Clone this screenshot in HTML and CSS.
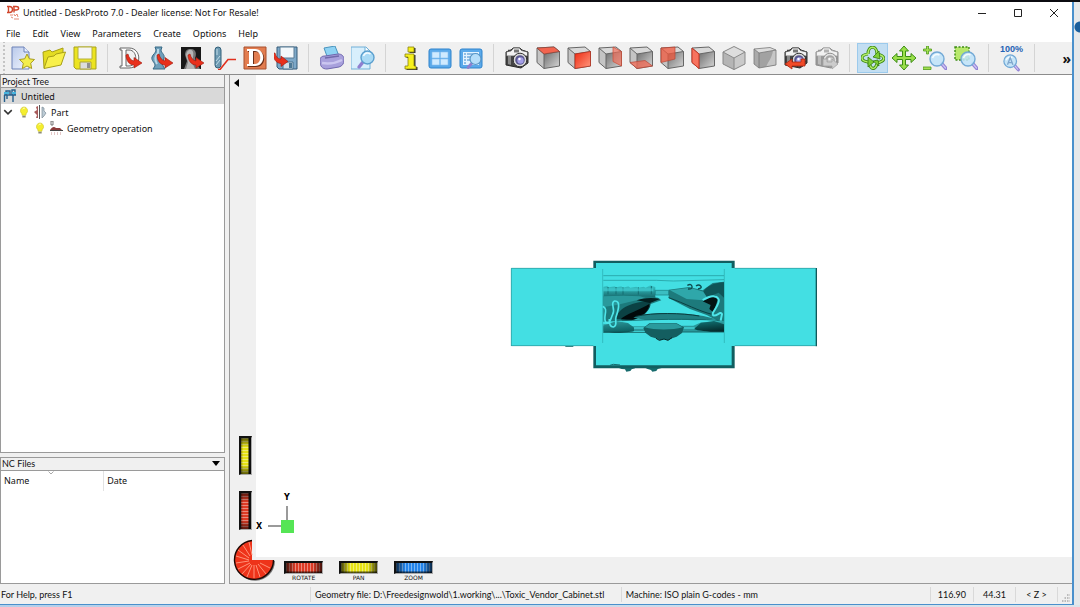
FILE: index.html
```html
<!DOCTYPE html>
<html lang="en">
<head>
  <meta charset="UTF-8">
  <meta name="viewport" content="width=device-width, initial-scale=1.0">
  <title>Untitled - DeskProto 7.0</title>
  <link rel="stylesheet" href="styles.css">
</head>
<body>
  <!-- Shared icon parts -->
  <svg class="defs" aria-hidden="true">
    <defs>
      <linearGradient id="gray" x1="0" y1="0" x2="1" y2="1">
        <stop offset="0" stop-color="#6e6e6e"/><stop offset="1" stop-color="#d8d8d8"/>
      </linearGradient>
      <linearGradient id="red" x1="0" y1="0" x2="1" y2="1">
        <stop offset="0" stop-color="#ee2a12"/><stop offset="1" stop-color="#ff9a80"/>
      </linearGradient>
      <linearGradient id="page" x1="0" y1="0" x2="1" y2="1">
        <stop offset="0" stop-color="#b9c9ea"/><stop offset="1" stop-color="#f2f6ff"/>
      </linearGradient>
      <linearGradient id="shade" x1="0" y1="0" x2="1" y2="1">
        <stop offset="0" stop-color="#2f9c9f"/><stop offset="0.5" stop-color="#0f6466"/><stop offset="1" stop-color="#021c1d"/>
      </linearGradient>
      <linearGradient id="shade2" x1="0" y1="0" x2="0" y2="1">
        <stop offset="0" stop-color="#38c9cd"/><stop offset="1" stop-color="#0d4f51"/>
      </linearGradient>
      <symbol id="arrow" viewBox="0 0 24 24">
        <path d="M9 8c1 4 3 6.500 6 7v-3.500l8 5.500-8 5v-3c-5 0-8-5-8-10z" fill="#e8301c" stroke="#9c1a0e" stroke-width=".6"/>
      </symbol>
      <symbol id="lens" viewBox="0 0 24 24">
        <path d="M18 17l4 4.500" stroke="#9484d6" stroke-width="3.600" stroke-linecap="round"/>
        <path d="M18.500 17.500l3 3.500" stroke="#cfc6f5" stroke-width="1.200" stroke-linecap="round"/>
        <circle cx="13" cy="12" r="7" fill="#bfe2f8" fill-opacity=".88" stroke="#72a9d6" stroke-width="1.400"/>
        <path d="M8.500 11c1-3 4-4.500 7-3" fill="none" stroke="#f4fbff" stroke-width="1.600"/>
      </symbol>
      <symbol id="cube" viewBox="0 0 24 24">
        <path d="M1 2l17-1 5.500 4.500L8 8z" fill="#d9d9d9"/>
        <path d="M1 2l7 6v14.500L1 16.500z" fill="#c4c4c4"/>
        <path d="M8 8l15.500-2.500V20L8 22.500z" fill="url(#gray)"/>
        <path d="M1 2l17-1 5.500 4.500V20L8 22.500 1 16.500zM1 2l7 6 15.500-2.500M8 8v14.500" fill="none" stroke="#666" stroke-width="1"/>
      </symbol>
      <symbol id="camera" viewBox="0 0 24 24">
        <path d="M1 6l5-2 2-2 7 0 2 2 6 2v11l-7 5-15-3z" fill="#444" stroke="#2c2c2c"/>
        <path d="M1.500 6l5-1.500 2-2.500h6l2 2.500 6 1.500v4H1.500z" fill="#f2f2f2" stroke="#555" stroke-width=".8"/>
        <path d="M9 3.500h5v3H9z" fill="#777"/>
        <path d="M3 4.500h3" stroke="#444" stroke-width="1.500"/>
        <path d="M3 10v8l3 1v-9z" fill="#888"/>
        <circle cx="15" cy="14" r="6.800" fill="#d8d8d8" stroke="#333"/>
        <circle cx="15" cy="14" r="4.800" fill="#5a5890"/>
        <circle cx="15.500" cy="14.500" r="3.200" fill="#a59fe8"/>
        <circle cx="14.500" cy="13" r="1.200" fill="#fff"/>
      </symbol>
      <symbol id="bulb" viewBox="0 0 10 14">
        <path d="M5 1a4 4 0 0 1 2.500 7L7 10H3l-.5-2A4 4 0 0 1 5 1z" fill="#f4ee2e" stroke="#c9bf20" stroke-width=".6"/>
        <path d="M3.500 3.500C4 2.500 5 2 6 2.500" stroke="#fffde0" fill="none"/>
        <path d="M3.200 10.500h3.600v2H3.200z" fill="#8b8b76"/>
      </symbol>
    </defs>
  </svg>

  <div class="desktop">
    <div class="window">
      <header class="titlebar">
        <svg class="logo" viewBox="0 0 14 16" aria-hidden="true">
          <path d="M1 1.500h2.500c4 0 4 6 0 6H1M2.500 1.500v6M8 1.500v6M7 1.500h3c3.500 0 3.500 3.500 0 3.500H8" fill="none" stroke="#d0452b" stroke-width="1.400"/>
          <path d="M4 10h3M8 9l1 2 2-2 1 3M5 12l2 1M8 14h5" fill="none" stroke="#e58a74"/>
        </svg>
        <h1 class="title">Untitled - DeskProto 7.0 - Dealer license: Not For Resale!</h1>
        <div class="window-buttons">
          <button type="button" aria-label="Minimize"><svg viewBox="0 0 10 10"><path d="M1 5.500h8"/></svg></button>
          <button type="button" aria-label="Maximize"><svg viewBox="0 0 10 10"><path d="M1.500 1.500h7v7h-7z"/></svg></button>
          <button type="button" aria-label="Close"><svg viewBox="0 0 10 10"><path d="M1 1l8 8M9 1l-8 8"/></svg></button>
        </div>
      </header>

      <nav class="menubar" aria-label="Main menu">
        <button type="button">File</button>
        <button type="button">Edit</button>
        <button type="button">View</button>
        <button type="button">Parameters</button>
        <button type="button">Create</button>
        <button type="button">Options</button>
        <button type="button">Help</button>
      </nav>

      <div class="toolbar" role="toolbar" aria-label="Tools">
        <div class="group">
          <button type="button" aria-label="New project">
            <svg viewBox="0 0 24 24"><path d="M1 1h12l5 5v17H1z" fill="url(#page)" stroke="#6c82b8"/><path d="M13 1v5h5" fill="#e7eeff" stroke="#6c82b8"/><path d="M16 8l2.300 4.800 5.200.7-3.800 3.700 1 5.300-4.700-2.500-4.700 2.500 1-5.300-3.800-3.700 5.200-.7z" fill="#f3ee4c" stroke="#a89c22"/></svg>
          </button>
          <button type="button" aria-label="Open project">
            <svg viewBox="0 0 24 24"><path d="M2 22L1 6l7-2 2 2 11-4v6" fill="#e4dc22" stroke="#a8a018"/><path d="M2 22.500L6 11l6-1 2-2 9.500-2L19 19z" fill="#f8f04a" stroke="#a8a018"/></svg>
          </button>
          <button type="button" aria-label="Save project">
            <svg viewBox="0 0 24 24"><path d="M1 1h22v22H3l-2-2z" fill="#ece420" stroke="#a8a21c"/><path d="M5 1h14v12H5z" fill="#f5f5f5" stroke="#b5b03a"/><path d="M7 16h11v7H7z" fill="#ddd" stroke="#aaa43a"/><path d="M14 17h3v5h-3z" fill="#8f8f8f"/></svg>
          </button>
        </div>
        <div class="group">
          <button type="button" aria-label="Load vector file">
            <svg viewBox="0 0 24 24"><path d="M1 2h9c13 0 13 20 0 20H1v-2h2V4H1zM7 4v16h3c9 0 9-16 0-16z" fill="#fff" stroke="#555" stroke-width=".9"/><use href="#arrow"/></svg>
          </button>
          <button type="button" aria-label="Load geometry file">
            <svg viewBox="0 0 24 24"><path d="M5 1h7l-1 3c0 3 4 4 3 8-1 4-2 5-1 8l2 3H3l2-3c0-4-4-5-3-9 1-3 4-4 4-7z" fill="#6f9fba" stroke="#386a86"/><path d="M8 3v4c-3 3-4 6-1 11" fill="none" stroke="#b9d9e8" stroke-width="2"/><use href="#arrow"/></svg>
          </button>
          <button type="button" aria-label="Load bitmap file">
            <svg viewBox="0 0 24 24"><path d="M0 1h20v22H0z" fill="#181818"/><path d="M9 3c6-1 7 5 5 9l1 4 4 7H3l3-8-2-6c0-4 2-6 5-6z" fill="#777"/><path d="M8 4c4-1 5 3 4 7l-1 5 3 7H5l2-7-2-6c0-3 1-5 3-6z" fill="#b5b5b5"/><use href="#arrow"/></svg>
          </button>
          <button type="button" aria-label="Toolpath">
            <svg viewBox="0 0 24 24"><rect x="3" y="1" width="6" height="21" rx="3" fill="#6e9bb3" stroke="#33617b"/><path d="M4 15l4-5M4 19l4-5M5 3v6" stroke="#c1dce8"/><path d="M6 23.500h2l8-10h8" fill="none" stroke="#e0301e" stroke-width="1.600"/></svg>
          </button>
          <button type="button" aria-label="DeskProto wizard">
            <svg viewBox="0 0 24 24"><path d="M1 1h22v22H1z" fill="#e27d50" stroke="#a8502e"/><path d="M4 3h8c11 0 11 17 0 17H4v-2h2V5H4zM10 5v13h2c7 0 7-13 0-13z" fill="#6b2e17" transform="translate(1 1)"/><path d="M4 3h8c11 0 11 17 0 17H4v-2h2V5H4zM10 5v13h2c7 0 7-13 0-13z" fill="#fff"/></svg>
          </button>
          <button type="button" aria-label="Write NC program">
            <svg viewBox="0 0 24 24"><path d="M3 1h20v22H5l-2-2z" fill="#7da8c8" stroke="#345a78"/><path d="M6 1h14v11H6z" fill="#f3f8fb" stroke="#5a7d96"/><path d="M9 16h10v7H9z" fill="#cfdfe9" stroke="#49708d"/><path d="M15 17h3v5h-3z" fill="#4c7895"/><path d="M1 7c1 4 3 6 6 6v-3l7 5.500-7 5v-3c-5 0-8-5-8-10.500z" fill="#e8301c" stroke="#9c1a0e" stroke-width=".6"/></svg>
          </button>
        </div>
        <div class="group">
          <button type="button" aria-label="Print">
            <svg viewBox="0 0 24 24"><path d="M4 2l11-2 4 10-11 3z" fill="#8fd3f4" stroke="#4a94bd"/><path d="M0 15c0-4 2-5 5-5l13-2c4 0 6 2 6 6s-2 6-5 7L7 23c-5 0-7-3-7-8z" fill="#a8a0dc" stroke="#6f67ae"/><path d="M5 12l14-2" stroke="#7069ab" stroke-width="1.500"/><path d="M2 17c6 1 14 0 20-3" fill="none" stroke="#cbc6f0" stroke-width="2.500"/></svg>
          </button>
          <button type="button" aria-label="Print preview">
            <svg viewBox="0 0 24 24"><path d="M0 1h15l4 4v18H0z" fill="#d8effc" stroke="#71b0d8"/><path d="M14 1v5h5" fill="#fff" stroke="#71b0d8"/><path d="M12 16l-4 5" stroke="#8f7fd0" stroke-width="3.400" stroke-linecap="round"/><circle cx="16.500" cy="11.500" r="6.500" fill="#a9daf5" stroke="#5b9fce" stroke-width="1.400"/><path d="M12.500 10c1-3 4-4 7-2" stroke="#f4fbff" stroke-width="1.600" fill="none"/></svg>
          </button>
        </div>
        <div class="group">
          <button type="button" aria-label="Information">
            <svg viewBox="0 0 24 24"><path d="M11 1h6v5h-6zM8 8h9v12h2v3H8v-3h3v-9H8z" fill="#333" transform="translate(1.500 1)"/><path d="M11 1h6v5h-6zM8 8h9v12h2v3H8v-3h3v-9H8z" fill="#f6f01c" stroke="#8a8410" stroke-width=".8"/></svg>
          </button>
          <button type="button" aria-label="Four views">
            <svg viewBox="0 0 24 24"><rect x="1" y="3" width="22" height="19" rx="2" fill="#5aa9ea" stroke="#2f83cc"/><path d="M4 6h7.500v6H4zM12.500 6H20v6h-7.500zM4 13h7.500v6H4zM12.500 13H20v6h-7.500z" fill="#cfeaff" stroke="#86c1f0" stroke-width=".6"/></svg>
          </button>
          <button type="button" aria-label="Single view">
            <svg viewBox="0 0 24 24"><rect x="1" y="3" width="22" height="19" rx="2" fill="#5aa9ea" stroke="#2f83cc"/><path d="M4 6h16v13H4z" fill="#e3f3ff"/><path d="M5 8h2M5 11h2M5 14h2M5 17h2M8 8h11M8 11h4M8 14h4" stroke="#3c88cc"/><path d="M13 17l-4 4.500" stroke="#8f7fd0" stroke-width="2.800" stroke-linecap="round"/><circle cx="16.500" cy="13" r="5.500" fill="#b5defa" stroke="#5795c6" stroke-width="1.200"/></svg>
          </button>
        </div>
        <div class="group">
          <button type="button" aria-label="Camera"><svg viewBox="0 0 24 24"><use href="#camera"/></svg></button>
          <button type="button" aria-label="Top view"><svg viewBox="0 0 24 24"><use href="#cube"/><path d="M1 2l17-1 5.500 4.500L8 8z" fill="#f2644f" stroke="#8c4035" stroke-width=".7"/></svg></button>
          <button type="button" aria-label="Front view"><svg viewBox="0 0 24 24"><use href="#cube"/><path d="M8 8l15.500-2.500V20L8 22.500z" fill="url(#red)" stroke="#b52a18" stroke-width=".7"/></svg></button>
          <button type="button" aria-label="Right view"><svg viewBox="0 0 24 24"><use href="#cube"/><path d="M15 1l8.500 4.500V20L15 15.500z" fill="#f36a54" fill-opacity=".65" stroke="#cf4d38" stroke-width=".7"/></svg></button>
          <button type="button" aria-label="Bottom view"><svg viewBox="0 0 24 24"><use href="#cube"/><path d="M1 16.500l15-2 7.500 5.500L8 22.500z" fill="#f36a54" fill-opacity=".75" stroke="#b94838" stroke-width=".7"/></svg></button>
          <button type="button" aria-label="Back view"><svg viewBox="0 0 24 24"><use href="#cube"/><path d="M1 2l14-1v12L1 16.500z" fill="#f0583e" fill-opacity=".75" stroke="#b94838" stroke-width=".7"/></svg></button>
          <button type="button" aria-label="Left view"><svg viewBox="0 0 24 24"><use href="#cube"/><path d="M1 2l7 6v14.500L1 16.500z" fill="#f7735f" stroke="#c93522"/></svg></button>
          <button type="button" aria-label="Isometric view"><svg viewBox="0 0 24 24"><path d="M12 0l11 6-11 6L1 6z" fill="#ddd"/><path d="M1 6l11 6v12L1 18z" fill="#b5b5b5"/><path d="M23 6l-11 6v12l11-6z" fill="#c9c9c9"/><path d="M12 .5L23 6v12l-11 5.500L1 18V6zM1 6l11 6 11-6M12 12v11.500" fill="none" stroke="#888"/></svg></button>
          <button type="button" aria-label="Perspective view"><svg viewBox="0 0 24 24"><path d="M1 3l16-1.500L23 4 6 7z" fill="#ddd"/><path d="M1 3l5 4v15l-5-4z" fill="#aaa"/><path d="M6 7l17-3v15L6 22z" fill="#a2a2a2"/><path d="M23 4v15l-10 2C15 16 19 12 20 4.500z" fill="#c6c6c6"/><path d="M1 3l16-1.500L23 4v15L6 22l-5-4zM1 3l5 4 17-3M6 7v15" fill="none" stroke="#777" stroke-width=".8"/></svg></button>
          <button type="button" aria-label="Restore view"><svg viewBox="0 0 24 24"><use href="#camera"/><path d="M1 18l7-5v3h9v-3h4v7H8v3z" fill="#f04a28" stroke="#a82712" stroke-width=".8"/></svg></button>
          <button type="button" aria-label="Store view" disabled><svg viewBox="0 0 24 24"><use href="#camera"/><path d="M23 18l-6-5v3h-5v-3H8v7h9v3z" fill="#aaa" stroke="#555" stroke-width=".8"/></svg></button>
        </div>
        <div class="group">
          <button type="button" class="checked" aria-pressed="true" aria-label="Rotate">
            <svg viewBox="0 0 24 24"><path d="M7 8c0-9 9-9 9 0M7 8c-8 1-8 7 0 8M16 8c9 2 9 7 0 9M8 17c2 7 6 7 8 1" fill="none" stroke="#3d8c14" stroke-width="3.200"/><path d="M7 8c0-9 9-9 9 0M7 8c-8 1-8 7 0 8M16 8c9 2 9 7 0 9M8 17c2 7 6 7 8 1" fill="none" stroke="#b4ec6a" stroke-width="1.400"/><path d="M7 11l6 5-6 5zM18 5l-6 6 7 2zM12 15l5-1 1 6z" fill="#7ccf34" stroke="#33780f" stroke-width=".8"/></svg>
          </button>
          <button type="button" aria-label="Pan">
            <svg viewBox="0 0 24 24"><path d="M12 0l4.500 5h-3v5.500H19v-3l5 4.500-5 4.500v-3h-5.500V19h3L12 24l-4.500-5h3v-5.500H5v3L0 12l5-4.500v3h5.500V5h-3z" fill="#9be04a" stroke="#3d8c14"/></svg>
          </button>
          <button type="button" aria-label="Zoom">
            <svg viewBox="0 0 24 24"><path d="M3.500 0h2v3h3v2h-3v3h-2V5h-3V3h3zM0 21h8v2.500H0z" fill="#a5e052" stroke="#4f9a1c" stroke-width=".8"/><use href="#lens" x="1" y="1"/></svg>
          </button>
          <button type="button" aria-label="Zoom to rectangle">
            <svg viewBox="0 0 24 24"><path d="M1 1h14v13H1z" fill="#b8e86c" stroke="#3d8c14" stroke-width="1.400" stroke-dasharray="2 1.500"/><use href="#lens" x="1" y="1"/></svg>
          </button>
        </div>
        <div class="group">
          <button type="button" class="fit" aria-label="Zoom to 100%">
            <span>100%</span>
            <svg viewBox="5 4 20 20"><use href="#lens" width="24" height="24"/><path d="M10 16l3-8 3 8M11 13.500h4" fill="none" stroke="#7fa6cc" stroke-width="1.500"/></svg>
          </button>
        </div>
        <button type="button" class="more" aria-label="More tools">»</button>
      </div>

      <main class="workspace">
        <aside class="sidebar">
          <section class="panel tree-panel">
            <h2 class="panel-title">Project Tree</h2>
            <ul class="tree">
              <li class="row selected">
                <svg class="wide" viewBox="0 0 14 14"><path d="M1 6h12M3 6V2h4v4M9 6V1h3v5M1.500 6v7M10 6v7M4 6v4" fill="none" stroke="#255f8c" stroke-width="1.400"/><path d="M1 4h5M9 4h4" stroke="#47b5df" stroke-width="2"/></svg>
                <span>Untitled</span>
              </li>
              <li class="row">
                <button type="button" class="expander" aria-label="Collapse Part"><svg viewBox="0 0 8 8"><path d="M1 2.500l3 3 3-3" fill="none" stroke="#333" stroke-width="1.200"/></svg></button>
                <svg class="bulb" viewBox="0 0 10 14"><use href="#bulb"/></svg>
                <svg class="wide" viewBox="0 0 14 14"><path d="M5 1v12H3l1-3-3-3 3-2-1-3z" fill="#a85a5a"/><path d="M6.500 0v14" stroke="#555"/><path d="M9 2l2 1v3l2 2-2 3-2 2z" fill="#bccbd5" stroke="#7b8b96" stroke-width=".7"/></svg>
                <span>Part</span>
              </li>
              <li class="row operation">
                <svg class="bulb" viewBox="0 0 10 14"><use href="#bulb"/></svg>
                <svg class="wide" viewBox="0 0 14 14"><path d="M2 0h2v4H2z" fill="none" stroke="#555" stroke-width=".8"/><path d="M1 9c2-3 4-4 6-2h4l2 2z" fill="#8c3b3b"/><path d="M1 9.500h13" stroke="#444"/><path d="M2 12h11M2 14h11" stroke="#c98f8f" stroke-dasharray="1 2"/></svg>
                <span>Geometry operation</span>
              </li>
            </ul>
          </section>
          <section class="panel files-panel">
            <h2 class="panel-title">NC Files <button type="button" class="drop" aria-label="Collapse NC Files"><svg viewBox="0 0 8 5"><path d="M0 0h8L4 5z"/></svg></button></h2>
            <table class="files">
              <thead>
                <tr><th scope="col" class="sorted" aria-sort="ascending">Name<svg viewBox="0 0 6 4" aria-hidden="true"><path d="M.5 .5l2.500 2.500L5.500.5" fill="none" stroke="#aaa"/></svg></th><th scope="col">Date</th></tr>
              </thead>
              <tbody></tbody>
            </table>
          </section>
        </aside>

        <section class="view" aria-label="Geometry view">
          <div class="left-controls">
            <button type="button" class="collapse" aria-label="Hide tree"><svg viewBox="0 0 5 8"><path d="M5 0v8L0 4z"/></svg></button>
            <input class="wheel vertical yellow" type="range" aria-label="Pan vertically">
            <input class="wheel vertical red" type="range" aria-label="Rotate vertically">
          </div>

          <div class="canvas">
            <svg class="model" viewBox="-243 15 930 336" role="img" aria-label="Cabinet model">
              <path d="M85 338l10 4 10 1 4 7 12-2 4-5 10-3v-4zM165 338l8 4 10 3 4 5 12-2 4-6 12-3z" fill="#176b6d"/>
              <path d="M10 17h424v323H10z" fill="#115e60"/>
              <path d="M18 24h407v307H18z" fill="#43dfe3"/>
              <path d="M-74 274h24" stroke="#176b6d" stroke-width="3"/>
              <path d="M-237 39H39v234h-276z" fill="#43dfe3"/>
              <path d="M404 39h277v234H404z" fill="#43dfe3"/>
              <path d="M-236 273V40H10M-236 272H10M434 40h243M434 272h243" fill="none" stroke="#2a9295" stroke-width="2"/>
              <path d="M679 39v235" stroke="#11595b" stroke-width="4"/>
              <path d="M38 42v222M403 42v222" stroke="#2baaae" stroke-width="2"/>
              <path d="M40 62h362M40 76h160l50 2 152-4" fill="none" stroke="#1f9296" stroke-width="2"/>
              <!-- upper left figure -->
              <path d="M40 95l12-3 4 5 18-3 4 3 16-3 5 4 16-4 6 4 18-3 6 3 16-3 6 3 14-7 15 5v38l-10 4-18-10-30 2-98-3z" fill="url(#shade2)"/>
              <path d="M54 96v22M78 96v22M99 97v22M145 97v22M184 93v25" stroke="#156d70" stroke-width="3"/>
              <path d="M40 104h150" stroke="#45d4d8" stroke-width="9" stroke-opacity=".6"/>
              <path d="M196 106h40v14h-40z" fill="#3bbec2" stroke="#17787b" stroke-width="2"/>
              <path d="M40 126l60-6 60 2 44 6 10 8-34 12c-4 24-22 40-52 48l-88 4z" fill="#1c7a7c"/>
              <path d="M40 124l60-2 50 2 20 6-40 8-50 12-40 6z" fill="#2a999c"/>
              <path d="M76 192c8-30 40-50 104-54 8 18-14 48-54 56z" fill="#0b4244"/>
              <path d="M92 193c12-14 60-30 86-46 0 18-20 40-50 48z" fill="#010a0b"/>
              <path d="M140 136c24-8 50-8 70-4l-30 12z" fill="#041f20"/>
              <!-- upper right figure -->
              <path d="M236 104l62-8 40 10 30-22 34-4v118h-18l-34-18-50-18-64-33z" fill="#1d7a7c"/>
              <path d="M240 106l60-8 40 12 25 6-25 20-50-4z" fill="#2fa7aa"/>
              <path d="M236 128c50 18 90 40 130 50" fill="none" stroke="#0a4042" stroke-width="3"/>
              <path d="M292 91q12-6 14 3t-12 8M318 93q8-6 14 0t-8 9" fill="none" stroke="#0e4a4c" stroke-width="4"/>
              <path d="M340 110c10-16 30-26 62-28v46l-16-15-35 14z" fill="#0f5557"/>
              <path d="M338 139l38-19 8 12-14 40-12-10 4-12z" fill="#031314"/>
              <!-- shelf -->
              <path d="M130 188c35-18 140-18 210-5l40 10-65 3-90-3-60 1z" fill="#217f82"/>
              <path d="M138 184c50-12 140-10 190-1" fill="none" stroke="#0a3c3e" stroke-width="3"/>
              <path d="M95 197c80-3 200-7 290-1" fill="none" stroke="#14696c" stroke-width="3"/>
              <!-- lower row -->
              <path d="M40 208h70l20 6h38v14H40zM275 212h35l24-10 68-4v32H275z" fill="#2a999c"/>
              <path d="M40 232c20 2 80 2 92-4v-10l-18-14-35-6-39 14zM312 222c10 6 60 10 90 8v-22l-30-10-40 6z" fill="url(#shade)"/>
              <path d="M132 219h36M278 219h36" stroke="#43cfd3" stroke-width="4"/>
              <path d="M40 232h130M272 231h130" stroke="#052f30" stroke-width="2"/>
              <path d="M160 219l18-14h82l22 12-6 17-16 11-18 6-8 5-12-4-12 4-8-5-20-6-16-12z" fill="#145e60"/>
              <path d="M164 217l16-11h80l18 11c-30 9-84 9-114 0z" fill="#2a9a9d"/>
              <path d="M198 250l10 6 14-4 12 4 12-8" fill="none" stroke="#042425" stroke-width="3"/>
              <path d="M38 154c20 6-2 36 10 48 12 8 14-12 20-24 10-18-10-35 6-40 20-1 10 30 4 48-4 14 6 26-8 30-14-2-12-16-12-24" fill="none" stroke="#4fe6ea" stroke-width="5"/>
              <path d="M338 135c24-14 42-16 48-2 5 18-26 42-16 48 10 4 22-14 26-4l-4 20" fill="none" stroke="#4fe6ea" stroke-width="6"/>
              <path d="M60 331l10-3 20 2" fill="none" stroke="#14696c" stroke-width="3"/>
            </svg>

            <svg class="axes" viewBox="0 0 44 46" role="img" aria-label="Axes">
              <path d="M14 36h14M33 16v14" stroke="#9a9a9a" stroke-width="2"/>
              <path d="M27 30h13v13H27z" fill="#55e555"/>
              <text x="2" y="39">X</text>
              <text x="30" y="10">Y</text>
            </svg>
          </div>

          <div class="bottom-controls">
            <label>
              <input class="wheel red" type="range">
              ROTATE
            </label>
            <label>
              <input class="wheel yellow" type="range">
              PAN
            </label>
            <label>
              <input class="wheel blue" type="range">
              ZOOM
            </label>
          </div>

          <svg class="dial" viewBox="-21 -21 42 42" role="img" aria-label="Rotation dial">
            <path d="M-3 0V-20A20 20 0 1 0 20 0z" fill="#777" transform="translate(1 1)"/>
            <path d="M-2 0V-19.500A19.500 19.500 0 1 0 19.500 0z" fill="#ee331a"/>
            <path d="M-2-19.500A19.500 19.500 0 1 0 19.500 0" fill="none" stroke="#1d0805" stroke-width="1.400"/>
            <path d="M-5-18L-2-5M-11-15L-4-4M-16-10L-5-2M-18-4L-5 0M-18 3L-5 1M-16 9L-4 3M-12 14L-3 4M-7 17L-2 5M0 18V5M6 17L2 5M12 14L4 4M16 8L6 3" stroke="#ff9278"/>
          </svg>
        </section>
      </main>

      <footer class="statusbar">
        <span class="hint">For Help, press F1</span>
        <span class="geometry">Geometry file: D:\Freedesignwold\1.working\...\Toxic_Vendor_Cabinet.stl</span>
        <span class="machine">Machine: ISO plain G-codes - mm</span>
        <span class="coord">116.90</span>
        <span class="coord">44.31</span>
        <span class="coord">&lt; Z &gt;</span>
        <svg class="grip" viewBox="0 0 9 9" aria-hidden="true"><path d="M1 8h8M3.500 5h6M6 2h3" stroke="#aaa" stroke-width="1.500" stroke-dasharray="1.500 1"/></svg>
      </footer>
    </div>
  </div>
</body>
</html>
```

FILE: styles.css
```css
* {
  margin: 0;
  padding: 0;
  box-sizing: border-box;
}

body {
  font-family: "Noto Sans", sans-serif;
  font-size: 9px;
  color: #111;
}

button {
  border: none;
  background: none;
  font: inherit;
  color: inherit;
}

svg {
  display: block;
}

.defs {
  position: absolute;
  width: 0;
  height: 0;
}

/* Window frame */

.desktop {
  height: 100vh;
  padding: 2px 6px 2px 0;
  background:
    radial-gradient(circle at 100% 27px, #1c5f9c 5px, transparent 6px),
    linear-gradient(#0b0b10, #0b0b10) top / 100% 2px no-repeat,
    linear-gradient(to right, #b4cfea, #dde4ea) bottom / 100% 2px no-repeat,
    #e6e8ea;
}

.window {
  height: 100%;
  display: flex;
  flex-direction: column;
  background: #f0f0f0;
  border-right: 2px solid #4a90cc;
  border-bottom: 1px solid #4a90cc;
}

.titlebar {
  display: flex;
  align-items: center;
  height: 21px;
  padding-left: 6px;
  gap: 3px;
  background: #fff;
}

.logo {
  width: 14px;
  height: 16px;
}

.title {
  flex: 1;
  font-size: 9px;
  font-weight: normal;
}

.window-buttons {
  display: flex;
}

.window-buttons button {
  width: 36px;
  height: 20px;
  display: flex;
  align-items: center;
  justify-content: center;
}

.window-buttons svg {
  width: 10px;
  height: 10px;
  fill: none;
  stroke: #222;
}

.menubar {
  display: flex;
  gap: 12px;
  height: 19px;
  padding: 1px 6px 0;
  background: #fff;
}

/* Toolbar */

.toolbar {
  display: flex;
  align-items: center;
  height: 33px;
  padding-left: 7px;
  border-bottom: 1px solid #8c8c8c;
  background: linear-gradient(#c4c4c4 50%, transparent 50%) 3px 3px / 2px 4px repeat-y, #f0f0f0;
}

.group {
  display: flex;
}

.group::after {
  content: "";
  width: 1px;
  height: 28px;
  margin: 1px 7px;
  background: #d4d4d4;
}

.group button {
  width: 31px;
  height: 30px;
  display: flex;
  align-items: center;
  justify-content: center;
}

.group svg {
  width: 24px;
  height: 24px;
}

.group button:disabled svg {
  filter: grayscale(1);
  opacity: 0.5;
}

.group .checked {
  background: #c3def2;
  border: 1px solid #9ccaec;
}

.group .fit {
  flex-direction: column;
  font-family: "Liberation Sans", sans-serif;
  font-size: 9px;
  line-height: 9px;
  font-weight: bold;
  color: #2563b5;
}

.group .fit svg {
  width: 18px;
  height: 18px;
}

.more {
  margin-left: auto;
  padding: 0 1px;
  font-size: 14px;
  font-weight: bold;
}

/* Side panels */

.workspace {
  flex: 1;
  min-height: 0;
  display: flex;
  gap: 4px;
}

.sidebar {
  width: 21%;
  max-width: 226px;
  display: flex;
  flex-direction: column;
  gap: 4px;
}

.panel {
  display: flex;
  flex-direction: column;
  border: 1px solid #9a9a9a;
  background: #fff;
}

.tree-panel {
  flex: 3;
  border-top: none;
}

.files-panel {
  flex: 1;
}

.panel-title {
  display: flex;
  align-items: center;
  justify-content: space-between;
  height: 13px;
  padding: 0 4px 0 1px;
  border-bottom: 1px solid #9a9a9a;
  background: #f0f0f0;
  font-family: Lato, sans-serif;
  font-size: 9px;
  font-weight: normal;
}

.drop svg {
  width: 8px;
  height: 5px;
}

.tree {
  list-style: none;
}

.row {
  display: flex;
  align-items: center;
  height: 16px;
  gap: 4px;
  padding-left: 2px;
}

.row.selected {
  background: #d9d9d9;
}

.row.operation {
  padding-left: 34px;
}

.expander {
  width: 12px;
}

.expander svg {
  width: 10px;
  height: 10px;
}

.bulb {
  width: 10px;
  height: 13px;
}

.wide {
  width: 14px;
  height: 14px;
}

.files {
  width: 100%;
  table-layout: fixed;
  border-collapse: collapse;
}

.files th {
  position: relative;
  height: 20px;
  padding-left: 3px;
  text-align: left;
  font-weight: normal;
}

.files .sorted {
  width: 46%;
  border-right: 1px solid #e2e2e2;
}

.files svg {
  position: absolute;
  top: 0;
  left: 46%;
  width: 6px;
  height: 4px;
}

/* 3D view */

.view {
  position: relative;
  flex: 1;
  display: grid;
  grid-template-columns: 26px 1fr;
  grid-template-rows: 1fr 26px;
  border-left: 1px solid #9a9a9a;
  border-bottom: 1px solid #9a9a9a;
}

.left-controls {
  display: flex;
  flex-direction: column;
  align-items: center;
  gap: 16px;
  padding: 4px 0 27px 4px;
}

.collapse {
  align-self: flex-start;
  margin-bottom: auto;
}

.collapse svg {
  width: 5px;
  height: 8px;
}

.canvas {
  position: relative;
  display: grid;
  place-items: center;
  background: #fff;
}

.model {
  width: 310px;
  height: 112px;
}

.axes {
  position: absolute;
  left: -2px;
  bottom: 21px;
  width: 44px;
  height: 46px;
}

.axes text {
  font: bold 8px "DejaVu Sans", sans-serif;
}

.bottom-controls {
  grid-column: 2;
  display: flex;
  gap: 16px;
  padding: 4px 0 0 28px;
}

.bottom-controls label {
  display: flex;
  flex-direction: column;
  align-items: center;
  font: 6px/8px "DejaVu Sans", sans-serif;
}

.wheel {
  --wheel: #dc3a24;
  appearance: none;
  width: 39px;
  height: 13px;
  border: 1px solid #aaa;
  border-top: 2px solid #111;
  border-left: 2px solid #111;
  background:
    linear-gradient(to right, rgba(0, 0, 0, 0.7), transparent 25%, transparent 75%, rgba(0, 0, 0, 0.7)),
    linear-gradient(transparent 75%, rgba(0, 0, 0, 0.8)),
    repeating-linear-gradient(to right, rgba(255, 255, 255, 0.4) 0 1px, transparent 1px 3px),
    var(--wheel);
}

.wheel::-webkit-slider-thumb {
  appearance: none;
  width: 1px;
  height: 1px;
}

.wheel.vertical {
  writing-mode: vertical-lr;
  width: 13px;
  height: 39px;
  background:
    linear-gradient(rgba(0, 0, 0, 0.6), transparent 25%, transparent 75%, rgba(0, 0, 0, 0.6)),
    linear-gradient(to right, rgba(0, 0, 0, 0.4), transparent 20%, transparent 65%, #111 85%),
    repeating-linear-gradient(rgba(255, 255, 255, 0.4) 0 1px, transparent 1px 3px),
    var(--wheel);
}

.wheel.yellow {
  --wheel: #e6e214;
}

.wheel.blue {
  --wheel: #2384ea;
}

.dial {
  position: absolute;
  left: 3px;
  bottom: 2px;
  width: 42px;
  height: 42px;
}

/* Status bar */

.statusbar {
  display: flex;
  align-items: center;
  height: 20px;
  font-family: Lato, sans-serif;
  font-size: 9px;
  white-space: nowrap;
}

.statusbar span {
  padding: 2px 4px;
  border-right: 1px solid #d9d9d9;
}

.statusbar .hint {
  flex: 0 0 29%;
  padding-left: 1px;
}

.statusbar .geometry {
  flex: 0 0 29%;
}

.statusbar .machine {
  flex: 1;
}

.statusbar .coord {
  min-width: 42px;
  padding: 2px 7px;
  text-align: center;
}

.grip {
  width: 9px;
  height: 9px;
  margin: 6px 2px 0 3px;
}
```
